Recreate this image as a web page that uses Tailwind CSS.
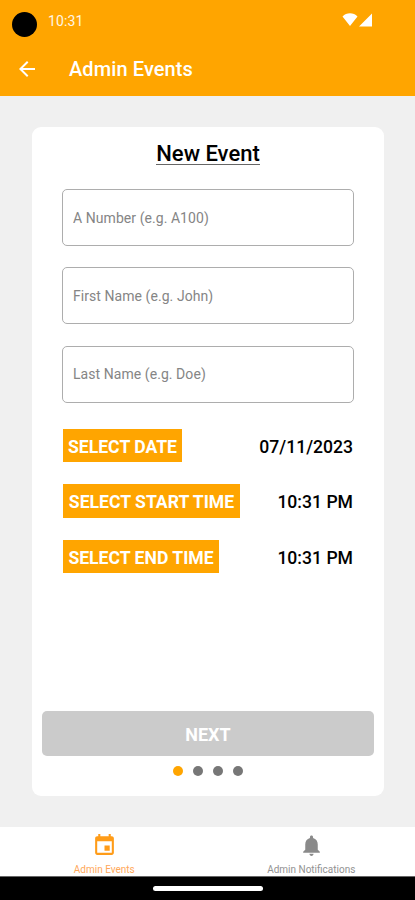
<!DOCTYPE html>
<html lang="en">
<head>
<meta charset="utf-8">
<title>Admin Events</title>
<script src="https://cdn.jsdelivr.net/npm/@tailwindcss/browser@4"></script>
</head>
<body class="w-[415px] h-[900px] overflow-hidden flex flex-col bg-[#f0f0f0] font-['Roboto',sans-serif] text-black">
  <header class="h-24 shrink-0 bg-[#ffa500] text-white">
    <div class="flex h-[42px] pl-3 pr-[42px]">
      <span class="mt-3 size-[25px] rounded-full bg-black"></span>
      <span class="ml-[11px] mt-[11px] text-[14px] leading-5 tracking-[0.1px] text-white/90">10:31</span>
      <svg class="ml-auto mt-3 h-[15px] w-[31px]" viewBox="0 0 31 15" fill="#fff"><path d="M.5 4.500C4.500.2 11.500.2 15.500 4.500L8 14zM30 1.500V14.500H17z"/></svg>
    </div>
    <div class="flex h-[54px] items-center pl-[15px]">
      <svg class="size-6" viewBox="0 0 24 24" fill="#fff"><path d="M20 11H7.830l5.590-5.590L12 4l-8 8 8 8 1.410-1.410L7.830 13H20v-2z"/></svg>
      <h1 class="ml-[30px] text-[20px] leading-6 font-medium tracking-[0.1px]">Admin Events</h1>
    </div>
  </header>
  <main class="flex-1 px-8 pt-[31px]">
    <section class="flex h-[669px] w-[352px] flex-col rounded-[9px] bg-white px-[10px]">
      <h2 class="mt-[13px] h-7 text-center text-[22px] leading-7 font-medium"><span class="inline-block h-[25px] border-b border-[#666]">New Event</span></h2>
      <div class="mt-[21px] flex flex-col gap-[21.400px] px-5">
        <input class="h-[57px] w-full rounded-[5px] border border-[#adadad] px-[10px] text-[14px] tracking-[0.06px] placeholder:text-[#858585]" placeholder="A Number (e.g. A100)">
        <input class="h-[57px] w-full rounded-[5px] border border-[#adadad] px-[10px] text-[14px] tracking-[0.06px] placeholder:text-[#858585]" placeholder="First Name (e.g. John)">
        <input class="h-[57px] w-full rounded-[5px] border border-[#adadad] px-[10px] text-[14px] tracking-[0.06px] placeholder:text-[#858585]" placeholder="Last Name (e.g. Doe)">
      </div>
      <div class="mt-[26px] flex flex-col gap-[22px] px-[21px] text-[17.600px] font-medium">
        <div class="flex items-center justify-between"><button class="h-[33.500px] w-[119px] bg-[#ffa500] pt-[3px] font-bold whitespace-nowrap text-white">SELECT DATE</button><span class="pt-[3px]">07/11/2023</span></div>
        <div class="flex items-center justify-between"><button class="h-[33.500px] w-[177px] bg-[#ffa500] pt-[3px] font-bold whitespace-nowrap text-white">SELECT START TIME</button><span class="pt-[3px]">10:31 PM</span></div>
        <div class="flex items-center justify-between"><button class="h-[33.500px] w-[156px] bg-[#ffa500] pt-[3px] font-bold whitespace-nowrap text-white">SELECT END TIME</button><span class="pt-[3px]">10:31 PM</span></div>
      </div>
      <button class="mt-auto h-[45px] shrink-0 rounded-[5px] bg-[#cbcbcb] pt-px text-[18px] font-bold text-white">NEXT</button>
      <div class="mt-[10px] mb-5 flex justify-center gap-[10.200px]">
        <span class="size-[10px] rounded-full bg-[#ffa500]"></span>
        <span class="size-[10px] rounded-full bg-[#777]"></span>
        <span class="size-[10px] rounded-full bg-[#777]"></span>
        <span class="size-[10px] rounded-full bg-[#777]"></span>
      </div>
    </section>
  </main>
  <nav class="grid h-[49px] shrink-0 grid-cols-2 bg-white text-[10px] leading-3">
    <div class="flex flex-col items-center pl-px pt-[6px] text-[#ffa85a]">
      <svg class="size-[25px]" viewBox="0 0 24 24" fill="#ff9c18"><path d="M17 12h-5v5h5v-5zM16 1v2H8V1H6v2H5c-1.110 0-1.990.9-1.990 2L3 19c0 1.100.89 2 2 2h14c1.100 0 2-.9 2-2V5c0-1.100-.9-2-2-2h-1V1h-2zm3 18H5V8h14v11z"/></svg>
      <span class="mt-[6px]">Admin Events</span>
    </div>
    <div class="flex flex-col items-center pt-[6px] text-[#929292]">
      <svg class="size-[25px]" viewBox="0 0 24 24" fill="#8a8a8a"><path d="M12 22c1.100 0 2-.9 2-2h-4c0 1.100.89 2 2 2zm6-6v-5c0-3.070-1.640-5.640-4.500-6.320V4c0-.83-.67-1.500-1.500-1.500s-1.500.67-1.500 1.500v.68C7.630 5.360 6 7.920 6 11v5l-2 2v1h16v-1l-2-2z"/></svg>
      <span class="mt-[6px]">Admin Notifications</span>
    </div>
  </nav>
  <footer class="flex h-6 shrink-0 justify-center border-t border-[#666] bg-black pt-[9px]"><span class="h-[5px] w-[110px] rounded-full bg-white"></span></footer>
</body>
</html>
